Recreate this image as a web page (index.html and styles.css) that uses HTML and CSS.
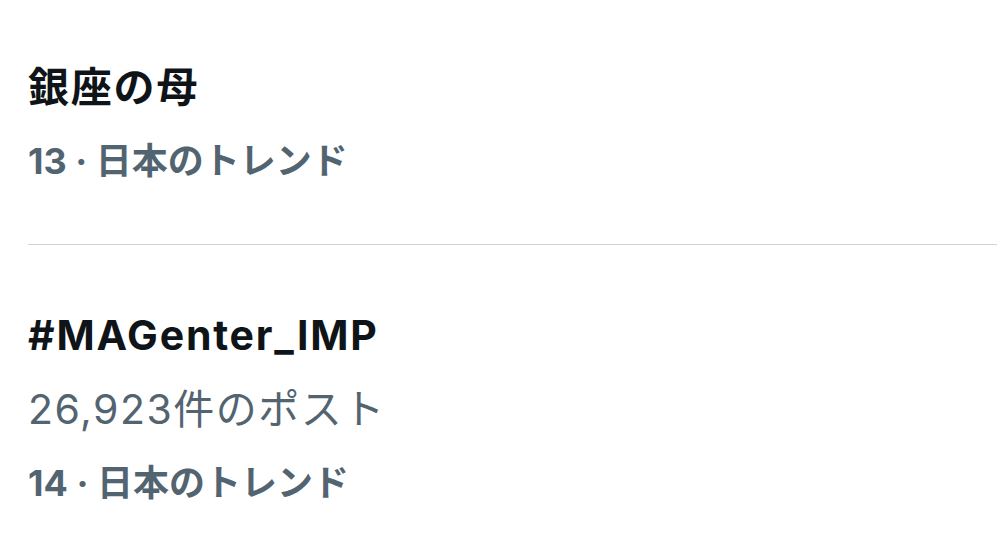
FILE: index.html
```html
<!DOCTYPE html>
<html lang="ja">
<head>
    <meta charset="UTF-8">
    <meta name="viewport" content="width=device-width, initial-scale=1.0">
    <title>トレンド</title>
    <link rel="stylesheet" href="styles.css">
</head>
<body>

    <div class="trends">
        <div class="trend first">
            <div class="trend-title">銀座の母</div>
            <div class="trend-meta">13 · 日本のトレンド</div>
        </div>

        <div class="trend">
            <div class="trend-title">#MAGenter_IMP</div>
            <div class="trend-count">26,923件のポスト</div>
            <div class="trend-meta">14 · 日本のトレンド</div>
        </div>
    </div>

</body>
</html>
```

FILE: styles.css
```css
body {
    font-family: Inter, "Noto Sans CJK JP", sans-serif;
    background-color: #ffffff;
    margin: 0;
    padding: 0;
    width: 997px;
    height: 560px;
    overflow: hidden;
}

.trends {
    padding-left: 28px;
}

.trend {
    line-height: 74px;
    padding-top: 53px;
}

.trend.first {
    padding-top: 50px;
    padding-bottom: 46px;
    border-bottom: 1px solid #cfd4d8;
}

.trend-title {
    font-size: 41px;
    font-weight: 700;
    letter-spacing: 1.8px;
    color: #0f1419;
}

.trend-count {
    font-size: 41px;
    letter-spacing: 1.5px;
    color: #536471;
}

.trend-meta {
    font-size: 36px;
    font-weight: 700;
    color: #536471;
}
```
